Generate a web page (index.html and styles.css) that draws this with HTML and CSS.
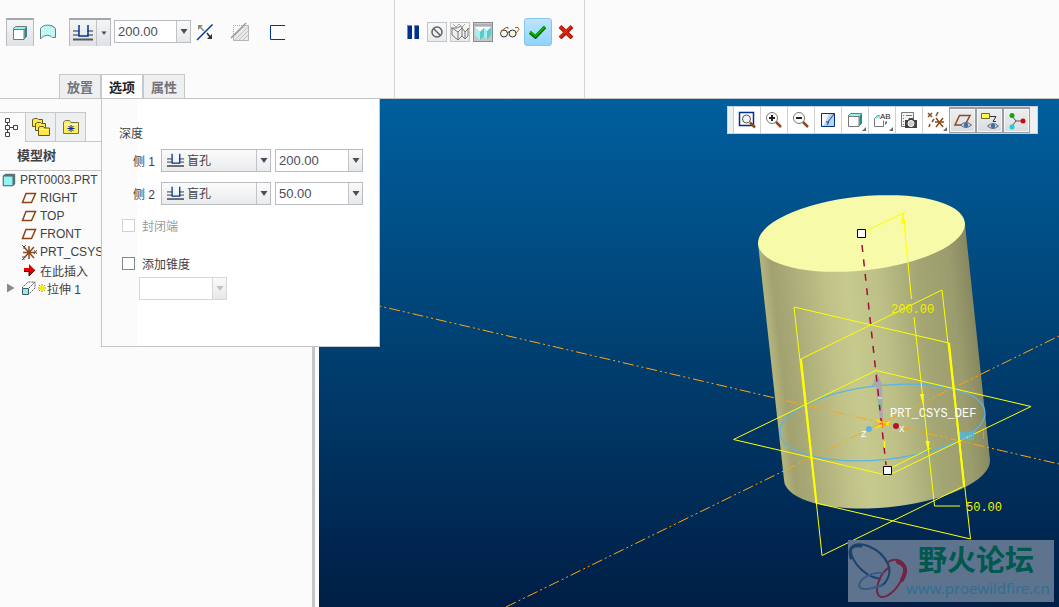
FILE: index.html
```html
<!DOCTYPE html>
<html lang="zh-CN">
<head>
    <meta charset="UTF-8">
    <meta name="viewport" content="width=device-width, initial-scale=1.0">
    <title>PRT0003</title>
    <link rel="stylesheet" href="styles.css">
</head>
<body>

    <svg class="sprites" aria-hidden="true">
        <symbol id="blind" viewBox="0 0 20 16">
            <path d="M0 6h6M14 6h6M0 10h6M14 10h6" stroke="#8b8d90" stroke-width="2"/>
            <path d="M0 14.5h20" stroke="#55585c" stroke-width="2"/>
            <path d="M6 0v11h9V0" fill="none" stroke="#003399" stroke-width="1.500"/>
        </symbol>
        <symbol id="plane" viewBox="0 0 16 12">
            <path d="M5 1.5h9.5L10.500 10.500H1.500z" fill="none" stroke="#8b4513" stroke-width="1.500"/>
        </symbol>
        <symbol id="down" viewBox="0 0 8 5">
            <path d="M0.500 0h7L4 5z" fill="currentColor"/>
        </symbol>
        <symbol id="cube" viewBox="0 0 16 16">
            <path d="M1 4L3.500 1.500h11v10L12 14z" fill="#8ef4f4" stroke="#777"/>
            <path d="M12.500 4l2-2.500v10l-2 2.500z" fill="#1f8a8e"/>
            <path d="M1.500 4.500h10.500v10h-10.500z" fill="#fff" stroke="#777"/>
        </symbol>
        <symbol id="eye" viewBox="0 0 12 8">
            <path d="M0.500 4Q6-1 11.500 4Q6 9 0.500 4z" fill="#c9d2dc" stroke="#667"/>
            <circle cx="6" cy="4" r="2.200" fill="#3b6fa8"/>
        </symbol>
    </svg>

    <header class="ribbon">
        <div class="tools">
            <div class="group group-main">
                <button class="tool pressed" title="实体"><svg width="16" height="16"><use href="#cube"/></svg></button>
                <button class="tool plain" title="曲面">
                    <svg width="18" height="18" viewBox="0 0 18 18">
                        <path d="M1.500 16V5.500C4 1 13 1 16.500 5.500V14.500H13.500C9 11 5 12 1.500 16z" fill="#b5f5f3" stroke="#5f7f84"/>
                        <path d="M4 5v8M7 4v8M10 4v8M13 5v9M2 7h14M2 10h14" stroke="#fff" stroke-dasharray="1 1"/>
                    </svg>
                </button>
                <div class="split">
                    <button title="盲孔"><svg width="20" height="16"><use href="#blind"/></svg></button>
                    <button class="split-arrow" title="深度选项"><svg width="6" height="4" viewBox="0 0 8 5"><use href="#down"/></svg></button>
                </div>
                <div class="combo">
                    <input type="text" value="200.00" aria-label="深度值">
                    <button title="最近值"><svg width="8" height="5"><use href="#down"/></svg></button>
                </div>
                <button class="tool plain" title="反向">
                    <svg width="18" height="18" viewBox="0 0 18 18">
                        <path d="M1 17L16.500 1.500" stroke="#003399" stroke-width="1.500"/>
                        <path d="M2 2h5L2 7z" fill="#8a8a78"/><path d="M4 4l4 4" stroke="#8a8a78" stroke-width="1.500"/>
                        <path d="M16 16h-5l5-5z" fill="#333"/><path d="M11 10l3 4" stroke="#333" stroke-width="1.500"/>
                    </svg>
                </button>
                <button class="tool plain cut" title="移除材料" disabled>
                    <svg width="20" height="20" viewBox="0 0 20 20">
                        <path d="M3.500 12V3.500H13" fill="none" stroke="#aaa" stroke-dasharray="1 1"/>
                        <path d="M3.500 14.500L15 3.500H18.500V18.500H3.500z" fill="#e9e9e9" stroke="#b5b5b5"/>
                        <path d="M5 18L18 5M9 18l9-9M13 18l5-5" stroke="#c2c2c2"/>
                        <path d="M1 16L16 1" stroke="#999" stroke-width="1.500"/>
                    </svg>
                </button>
                <button class="tool plain thicken" title="加厚草绘">
                    <svg width="18" height="18" viewBox="0 0 18 18"><path d="M17 2.500H2.500v14H17" fill="none" stroke="#003399"/></svg>
                </button>
            </div>
            <div class="group group-confirm">
                <button class="tool plain" title="暂停">
                    <svg width="12" height="14" viewBox="0 0 12 14"><path d="M0 0h5v14H0zM7 0h5v14H7z" fill="#6d8fc0"/><path d="M1 1h4v13H1zM8 1h4v13H8z" fill="#003087"/></svg>
                </button>
                <button class="mini" title="无预览">
                    <svg width="14" height="14" viewBox="0 0 14 14"><circle cx="7" cy="7" r="5" fill="none" stroke="#606266" stroke-width="1.500"/><path d="M3.500 3.500l7 7" stroke="#606266" stroke-width="1.500"/></svg>
                </button>
                <button class="mini" title="分离预览">
                    <svg width="18" height="18" viewBox="0 0 18 18" fill="none" stroke="#77776f">
                        <path d="M0 5h6l4-2M1 5v7l6 5 4-4V5M7 9v8M1 5l6 4 4-4 3 4 4-4M14 9v7l-3-3M17 5v8l-3 3"/>
                        <path d="M2 1l4 4M8 1l4 4M14 1l-4 4M8 1L4 5" stroke="#aaa89a"/>
                    </svg>
                </button>
                <button class="mini mini-on" title="连接预览">
                    <svg width="18" height="18" viewBox="0 0 18 18">
                        <path d="M1 4h16l-3 5-4-4-4 4z" fill="#fff"/>
                        <path d="M1 4l5 5v8l-5-5zM10 5l3 3v9l-3-4z" fill="#a9eeee"/>
                        <path d="M6 9l4-4v8l-4 4zM13 8l4-4v8l-4 5z" fill="#5cc9cb"/>
                        <path d="M0 2h18" stroke="#999"/>
                    </svg>
                </button>
                <button class="tool plain" title="校验">
                    <svg width="22" height="12" viewBox="0 0 22 12" fill="none">
                        <circle cx="5" cy="7.500" r="3.500" fill="#f5f7e4" stroke="#333"/><circle cx="13.500" cy="7.500" r="3.500" fill="#f5f7e4" stroke="#333"/>
                        <path d="M8.500 6.500q1-1 2 0" stroke="#333"/><path d="M3 4.500L7 1.500h2v1.500M17 7l3-3.500-1-2h-3" stroke="#a5562a"/>
                    </svg>
                </button>
                <button class="ok" title="确定">
                    <svg width="20" height="14" viewBox="0 0 20 14"><path d="M2 7.500L7.500 12 17 2" fill="none" stroke="#006b00" stroke-width="3.500"/><path d="M2 6.500L7.500 11 17 1.500" fill="none" stroke="#10b000" stroke-width="2"/></svg>
                </button>
                <button class="tool plain" title="取消">
                    <svg width="16" height="14" viewBox="0 0 16 14"><path d="M2 1.500l12 11.500M14 1.500L2 13" stroke="#a51400" stroke-width="4"/><path d="M2 1.500l11 10.500M13 1.500L2 12" stroke="#e02810" stroke-width="2"/></svg>
                </button>
            </div>
        </div>
        <nav class="tabs">
            <button class="tab">放置</button>
            <button class="tab active">选项</button>
            <button class="tab">属性</button>
        </nav>
    </header>

    <main class="workspace">
        <aside class="sidebar">
            <div class="side-tabs">
                <button class="side-tab active" title="模型树">
                    <svg width="14" height="20" viewBox="0 0 14 20" fill="none" stroke="#444"><path d="M1.500 1.500h4v4h-4zM1.500 8.500h4v4h-4zM9.500 8.500h4v4h-4zM1.500 15.500h4v4h-4zM3.500 5.500v3M3.500 12.500v3M5.500 10.500h4"/></svg>
                </button>
                <button class="side-tab" title="文件夹浏览器">
                    <svg width="20" height="20" viewBox="0 0 20 20" fill="#ffe64a" stroke="#5d5a20">
                        <path d="M1.500 9.500v-7l2-1h3l1 1h4v7z"/><path d="M4.500 13.500v-7l2-1h3l1 1h4v7z"/><path d="M7.500 18.500v-8l2-1h3l1 1.500h5v7.500z"/><path d="M8 12.500h10" stroke="#fff9b0"/>
                    </svg>
                </button>
                <button class="side-tab" title="收藏夹">
                    <svg width="18" height="16" viewBox="0 0 18 16"><path d="M1.500 14.500V3l2-1.500h4L9 3.500h7.500v11z" fill="#ffef55" stroke="#77773a"/><path d="M2 5.500h14" stroke="#fffbc0"/><path d="M9 6v7M5.500 9.500h7M6.500 7l5 5M11.500 7l-5 5" stroke="#0a2a9c"/></svg>
                </button>
            </div>
            <h2>模型树</h2>
            <ul class="tree">
                <li class="root"><svg width="14" height="14" viewBox="0 0 16 16"><path d="M1.500 3.500l2-2h11v11l-2 2h-11z" fill="#2a8f92" stroke="#556"/><path d="M1.500 3.500h11v11h-11z" fill="#90f5f5" stroke="#566"/></svg>PRT0003.PRT</li>
                <li><svg width="16" height="12"><use href="#plane"/></svg>RIGHT</li>
                <li><svg width="16" height="12"><use href="#plane"/></svg>TOP</li>
                <li><svg width="16" height="12"><use href="#plane"/></svg>FRONT</li>
                <li><svg width="16" height="16" viewBox="0 0 16 16"><path d="M8 2v13M2 8.500h12M3 3l10 11M13 3L3 14" stroke="#8b4a20" stroke-width="1.500"/><path d="M1 1l2 2 2-2M3 3v2M1 13h3l-3 3h3M13 6l3 4M16 6l-3 4" stroke="#555" fill="none"/></svg>PRT_CSYS</li>
                <li class="insert"><svg width="12" height="12" viewBox="0 0 12 12"><path d="M0 4h5V0l6 6-6 6V8H0z" fill="#e00000"/><path d="M0 7.500h5V12l6-6" stroke="#500" fill="none"/></svg>在此插入</li>
                <li class="feature">
                    <svg width="8" height="10" viewBox="0 0 8 10"><path d="M0 0.500l7.500 4.500L0 9.500z" fill="#888"/></svg>
                    <svg width="16" height="16" viewBox="0 0 16 16"><path d="M1 8l6-6h7v6l-6 6M8 8l6-6" fill="none" stroke="#555" stroke-dasharray="2 1"/><path d="M1.500 8.500h6v6h-6z" fill="#8ef0f0" stroke="#456"/></svg>
                    <svg width="8" height="8" viewBox="0 0 8 8"><path d="M4 0v8M0 4h8M1 1l6 6M7 1L1 7" stroke="#a89c00"/><circle cx="4" cy="4" r="2.500" fill="#ffee00"/></svg>拉伸 1
                </li>
            </ul>
        </aside>

        <form class="options">
            <div class="section-title">深度</div>
            <div class="row">
                <label for="side1">侧 1</label>
                <div class="picker">
                    <svg width="17" height="15"><use href="#blind"/></svg>
                    <select id="side1"><option>盲孔</option></select>
                    <span class="picker-arrow"><svg width="8" height="5"><use href="#down"/></svg></span>
                </div>
                <div class="combo">
                    <input type="text" value="200.00" aria-label="侧 1 深度">
                    <button type="button" title="最近值"><svg width="8" height="5"><use href="#down"/></svg></button>
                </div>
            </div>
            <div class="row">
                <label for="side2">侧 2</label>
                <div class="picker">
                    <svg width="17" height="15"><use href="#blind"/></svg>
                    <select id="side2"><option>盲孔</option></select>
                    <span class="picker-arrow"><svg width="8" height="5"><use href="#down"/></svg></span>
                </div>
                <div class="combo">
                    <input type="text" value="50.00" aria-label="侧 2 深度">
                    <button type="button" title="最近值"><svg width="8" height="5"><use href="#down"/></svg></button>
                </div>
            </div>
            <label class="check disabled"><input type="checkbox" disabled>封闭端</label>
            <label class="check"><input type="checkbox">添加锥度</label>
            <div class="combo taper disabled">
                <input type="text" aria-label="锥度" disabled>
                <button type="button" title="最近值" disabled><svg width="8" height="5"><use href="#down"/></svg></button>
            </div>
        </form>

        <section class="viewport">
            <svg class="scene" viewBox="319 99 740 508" preserveAspectRatio="xMidYMid slice">
                <defs>
                    <linearGradient id="body" gradientUnits="userSpaceOnUse" x1="758" y1="243" x2="965" y2="220">
                        <stop offset="0" stop-color="#b4b57e"/>
                        <stop offset="0.050" stop-color="#a2a271"/>
                        <stop offset="0.120" stop-color="#a8a976"/>
                        <stop offset="0.300" stop-color="#bfc187"/>
                        <stop offset="0.400" stop-color="#c7ca8e"/>
                        <stop offset="0.550" stop-color="#bec187"/>
                        <stop offset="0.750" stop-color="#a3a573"/>
                        <stop offset="0.900" stop-color="#9c9d6e"/>
                        <stop offset="1" stop-color="#86875f"/>
                    </linearGradient>
                </defs>

                <!-- cylinder -->
                <path d="M758 243L784 480A103 37 -6 0 0 990 460L965 224z" fill="url(#body)"/>
                <ellipse cx="861.500" cy="233.500" rx="104" ry="37" transform="rotate(-6 861.500 233.500)" fill="#f6faa9"/>

                <!-- datum axes -->
                <g stroke="#ffa510" stroke-dasharray="11 3 2 3 2 3">
                    <path d="M319 292L1059 464"/>
                    <path d="M506 607L1059 336"/>
                </g>

                <!-- sketch circle -->
                <ellipse cx="882.500" cy="422.500" rx="103" ry="37" transform="rotate(-6 882.500 422.500)" fill="none" stroke="#5ab4e6" stroke-width="1.200"/>

                <!-- datum planes -->
                <g fill="none" stroke="#ffff00">
                    <path d="M794 307L949 343L970.500 539L816 503z"/>
                    <path d="M942 290L801 359L822 555.500L964 486z"/>
                    <path d="M876 370.500L1031 406.500L888 475.500L733.500 439.500z"/>
                    <path d="M801 359L816.500 503M949 343L964 486" stroke-width="2"/>
                    <path d="M863 232.500L905.500 212M903 213L911.500 299M914 317L934.500 506H960M889 469L931 448"/>
                </g>
                <path d="M903 213l-2 11h4.500zM923 405l-3-11h4zM928.500 452l-3-11h4z" fill="#ffff00"/>

                <!-- drag axis -->
                <path d="M877 373l-5 13 4 1 4 33 3 0-1-34 1 0z" fill="#aba9ad"/>
                <path d="M862 245L886 465" stroke="#a00f3c" stroke-width="1.500" stroke-dasharray="7 7.500"/>
                <path d="M884.500 441v7" stroke="#ffff00" stroke-width="1.500"/>
                <path d="M878 398h4" stroke="#eee"/>
                <path d="M878 404h4" stroke="#4bdc68" stroke-width="2"/>

                <!-- coordinate system -->
                <path d="M875 428l15-6M876 420l13 5M882 424l-3 3" stroke="#ffe600" stroke-width="1.500"/>
                <path d="M879 424h7M882.500 420v8" stroke="#ff7b1c"/>
                <circle cx="869" cy="429" r="3" fill="#5ab4e6"/>
                <circle cx="896" cy="426" r="3" fill="#b3122e"/>
                <text class="axis" x="861" y="437">Z</text>
                <text class="axis" x="899" y="432">X</text>
                <text class="note" x="890" y="417">PRT_CSYS_DEF</text>
                <text class="section" x="959" y="439">截面</text>
                <path d="M983.500 431v8" stroke="#5ab4e6"/>

                <text class="dim" x="891" y="313">200.00</text>
                <text class="dim" x="966" y="511">50.00</text>

                <!-- handles -->
                <path d="M857.500 229.500h8v8h-8zM883.500 466.500h8v8h-8z" fill="#fff" stroke="#000"/>

                <!-- watermark -->
                <rect x="848" y="540" width="206" height="62" fill="#5d738e"/>
                <g fill="none" stroke-linecap="round">
                    <path d="M880 579C861 576 847 555 852 547C858 540 880 547 888 564C893 576 883 588 878 586" stroke="#1c426c" stroke-width="2"/>
                    <path d="M851 558Q847 544 861 546" stroke="#1c426c" stroke-width="3"/>
                    <path d="M888 562C896 557 907 561 904 572C901 586 889 598 881 597C873 594 878 576 888 568" stroke="#722446" stroke-width="2"/>
                    <path d="M898 562Q910 566 902 580" stroke="#722446" stroke-width="4"/>
                    <path d="M883 573C872 571 859 579 859 586C862 592 873 588 882 585" stroke="#365c82" stroke-width="2"/>
                </g>
                <text class="mark-name" x="918" y="571">野火论坛</text>
                <text class="mark-url" x="906" y="594">www.proewildfire.cn</text>
            </svg>

            <div class="view-bar">
                <button title="重新调整"><svg width="18" height="18" viewBox="0 0 18 18"><path d="M1.500 1.500h14v13h-14z" fill="#fff" stroke="#003087" stroke-width="1.500"/><circle cx="8.500" cy="8" r="4" fill="#eef4f8" stroke="#555"/><path d="M12 11.500l5 5" stroke="#8b4a20" stroke-width="2.500"/></svg></button>
                <button title="放大"><svg width="18" height="18" viewBox="0 0 18 18"><circle cx="7" cy="7" r="5.500" fill="#fff" stroke="#777"/><path d="M4 7h6M7 4v6" stroke="#222" stroke-width="2"/><path d="M11 11l5 5" stroke="#8b4a20" stroke-width="2.500"/></svg></button>
                <button title="缩小"><svg width="18" height="18" viewBox="0 0 18 18"><circle cx="7" cy="7" r="5.500" fill="#fff" stroke="#777"/><path d="M4 7h6" stroke="#222" stroke-width="2"/><path d="M11 11l5 5" stroke="#8b4a20" stroke-width="2.500"/></svg></button>
                <button title="重画"><svg width="18" height="18" viewBox="0 0 18 18"><path d="M2.500 2.500h13v13h-13z" fill="#b9d3ea" stroke="#003087"/><path d="M3 3h7L5 14H3z" fill="#f4f8fc"/><path d="M15 3l-6 8M7 11l3 0-2 3" stroke="#173e8a" fill="none"/></svg></button>
                <button class="more" title="显示样式"><svg width="16" height="16"><use href="#cube"/></svg></button>
                <button class="more" title="已保存方向"><svg width="18" height="18" viewBox="0 0 18 18"><path d="M7 4.500H4.500l-3 3v8h9v-6" fill="none" stroke="#777"/><path d="M2 7.500l3-3h2v3z" fill="#7deeee"/><path d="M12 11v3l2-2v-2" fill="#168b90"/><text class="ab" x="7" y="8">AB</text></svg></button>
                <button title="视图管理器"><svg width="18" height="18" viewBox="0 0 18 18"><path d="M1.500 1.500h12v14h-12z" fill="#f4f4f4" stroke="#777"/><path d="M3 4.500h1M6 4.500h6M3 7.500h1M3 10.500h1M3 13.500h1" stroke="#777"/><path d="M5 9h3l1-2h4l1 2h3v8H5z" fill="#444"/><circle cx="11" cy="12.500" r="3" fill="#ccc" stroke="#fff"/></svg></button>
                <button class="more" title="基准显示"><svg width="20" height="18" viewBox="0 0 20 18" stroke="#8b4a20" stroke-width="1.500"><path d="M2 2l4 4M6 2L2 6M12 1l-2 4M8 8l-2 3M4 13l-1 3M10 7l7 9M17 7l-7 9M9 11h9"/></svg></button>
                <button class="on" title="平面显示"><svg width="20" height="18" viewBox="0 0 20 18"><path d="M6.500 3.500H17L12 13H2z" fill="none" stroke="#8b4a20" stroke-width="1.500"/><use href="#eye" x="7" y="9" width="12" height="8"/></svg></button>
                <button class="on" title="注释显示"><svg width="20" height="18" viewBox="0 0 20 18"><path d="M1.500 1.500h8v5h-8z" fill="#ffff55" stroke="#6c6c28"/><path d="M10 4.500h6l-3 5h3" fill="none" stroke="#333"/><use href="#eye" x="7" y="10" width="12" height="8"/></svg></button>
                <button class="on" title="旋转中心"><svg width="18" height="18" viewBox="0 0 18 18"><path d="M4 4l4 5h6M8 9l-4 5" fill="none" stroke="#555"/><circle cx="4" cy="3.500" r="2.500" fill="#12a612"/><circle cx="15" cy="9" r="2.500" fill="#d00808"/><circle cx="4" cy="15" r="2.500" fill="#18cfd4"/></svg></button>
            </div>
        </section>
    </main>

</body>
</html>
```
FILE: styles.css
```css
* {
    box-sizing: border-box;
}
body {
    margin: 0;
    height: 100vh;
    display: flex;
    flex-direction: column;
    overflow: hidden;
    background: #fbfbfb;
    color: #3f4145;
    font-family: "Liberation Sans", "Noto Sans CJK SC", sans-serif;
    font-size: 12px;
}
button, input, select {
    font: inherit;
    color: inherit;
    margin: 0;
    padding: 0;
    border: none;
    background: none;
}
button {
    display: flex;
    align-items: center;
    justify-content: center;
}
svg {
    display: block;
    flex: none;
}
.sprites {
    position: absolute;
    width: 0;
    height: 0;
}

/* ribbon */
.ribbon {
    position: relative;
    flex: none;
    height: 99px;
    border-bottom: 1px solid #c3c6c9;
}
.tools {
    display: flex;
    height: 98px;
}
.group {
    display: flex;
    align-items: flex-start;
    padding-top: 18px;
    border-right: 1px solid #d4d6d8;
}
.group-main {
    width: 395px;
    padding-left: 6px;
}
.group-confirm {
    width: 190px;
    padding-left: 4px;
}
.tool {
    width: 28px;
    height: 28px;
}
.pressed, .split {
    border: 1px solid #b9bcc0;
    border-top: 2px solid #a4a6a9;
    border-bottom: none;
    background: linear-gradient(#f4f5f6, #dfe1e5);
}
.split {
    display: flex;
    width: 42px;
    height: 28px;
    margin: 0 3px 0 7px;
    color: #4b4d58;
}
.split button {
    flex: 1;
}
.split .split-arrow {
    flex: none;
    width: 14px;
    border-left: 1px solid #c0c3c7;
}
.cut {
    margin-left: 7px;
}
.thicken {
    margin-left: 9px;
}
.combo {
    display: flex;
    width: 88px;
    height: 23px;
    border: 1px solid #b9bcc0;
    background: #fff;
    color: #4b4d58;
    font-size: 13px;
}
.combo input {
    flex: 1;
    min-width: 0;
    padding-left: 3px;
}
.combo button {
    width: 14px;
    border-left: 1px solid #c0c3c7;
    background: linear-gradient(#fafafa, #e6e8ea);
}
.group .combo {
    width: 77px;
    margin-top: 2px;
}
.mini {
    width: 20px;
    height: 20px;
    margin: 4px 3px 0 0;
    border: 1px solid #c3c6c9;
    background: linear-gradient(#f8f8f8, #e9eaec);
}
.mini-on {
    border-color: #888b8e;
    background: #c4c6c8;
}
.ok {
    width: 28px;
    height: 28px;
    border: 1px solid #86c5ee;
    border-radius: 3px;
    background: linear-gradient(#bfe5fb, #90d2fb);
}
.tabs {
    position: absolute;
    left: 59px;
    bottom: 0;
    display: flex;
}
.tab {
    width: 42px;
    height: 24px;
    border: 1px solid #c6c9cc;
    border-bottom: none;
    background: #eeeff1;
    color: #717379;
    font-size: 13px;
    font-weight: bold;
}
.tab.active {
    background: #fff;
    color: #222;
}

/* model tree */
.workspace {
    position: relative;
    flex: 1;
    min-height: 0;
    display: flex;
}
.sidebar {
    flex: none;
    width: 319px;
    padding-top: 13px;
    background: linear-gradient(90deg, #fbfbfb 312px, #c3c6c9 312px, #c3c6c9 315px, #fbfbfb 315px);
}
.side-tabs {
    display: flex;
    height: 30px;
    width: 312px;
    border-bottom: 1px solid #c6c9cc;
}
.side-tab {
    width: 30px;
    height: 29px;
    border: solid #c6c9cc;
    border-width: 1px 1px 0 0;
    background: #eeeff1;
}
.side-tab.active {
    width: 26px;
    height: 30px;
    padding: 0 3px 2px 0;
    background: #fbfbfb;
}
.sidebar h2 {
    width: 312px;
    height: 29px;
    margin: 0;
    padding-left: 17px;
    border-bottom: 1px solid #c6c9cc;
    font-size: 13px;
    line-height: 28px;
}
.tree {
    list-style: none;
    margin: 0;
    padding: 0;
}
.tree li {
    display: flex;
    align-items: center;
    gap: 3px;
    height: 18px;
    padding-left: 21px;
}
.tree .root {
    gap: 4px;
    padding-left: 2px;
}
.tree .insert {
    gap: 4px;
    padding-left: 24px;
}
.tree .feature {
    gap: 1px;
    padding-left: 7px;
}
.feature svg:first-child {
    margin-right: 5px;
}

/* options panel */
.options {
    position: absolute;
    z-index: 2;
    top: 0;
    left: 101px;
    width: 279px;
    padding: 26px 16px 46px 17px;
    border: 1px solid #c3c6c9;
    border-top: none;
    background: linear-gradient(90deg, #fbfbfb 35px, #fff 35px);
}
.section-title {
    height: 18px;
    margin-bottom: 6px;
    line-height: 18px;
}
.row {
    display: flex;
    align-items: center;
    gap: 4px;
    margin-bottom: 10px;
    padding-left: 14px;
}
.row label {
    width: 24px;
}
.picker {
    display: flex;
    align-items: center;
    width: 110px;
    height: 23px;
    padding-left: 5px;
    border: 1px solid #b9bcc0;
    background: linear-gradient(#fbfbfb, #eaebed);
}
.picker select {
    flex: 1;
    min-width: 0;
    height: 21px;
    padding-left: 3px;
    appearance: none;
}
.picker-arrow {
    display: flex;
    align-items: center;
    justify-content: center;
    width: 14px;
    height: 21px;
    border-left: 1px solid #c0c3c7;
    color: #4b4d58;
    pointer-events: none;
}
.check {
    display: flex;
    align-items: center;
    gap: 7px;
    height: 18px;
    margin-top: 20px;
    padding-left: 3px;
}
.row + .check {
    margin-top: 11px;
}
.check input {
    width: 13px;
    height: 13px;
    border: 1px solid #85888c;
    background: #fff;
    appearance: none;
}
.check input:checked {
    background: #003399;
}
.check.disabled {
    color: #989a9d;
}
.check.disabled input {
    border-color: #d0d2d4;
}
.combo.taper {
    margin: 5px 0 0 20px;
}
.combo.disabled {
    border-color: #d5d7d9;
    color: #bfc2c5;
}
.combo.disabled button {
    border-color: #d5d7d9;
}

/* graphics window */
.viewport {
    position: relative;
    flex: 1;
    min-width: 0;
    background: linear-gradient(#005f9e, #003f70 50%, #001e45);
}
.scene {
    width: 100%;
    height: 100%;
}
.scene text {
    font-family: "Liberation Mono", "Noto Sans CJK SC", monospace;
    font-size: 12px;
}
.scene .dim {
    fill: #f0f000;
}
.scene .note {
    fill: #fff;
}
.scene .axis {
    fill: #fff;
    font-size: 9px;
}
.scene .section {
    fill: #5ab4e6;
    font-size: 8px;
    font-weight: bold;
}
.scene .mark-name {
    fill: #00584f;
    font-family: "Noto Sans CJK SC", sans-serif;
    font-size: 29px;
    font-weight: bold;
}
.scene .mark-url {
    fill: #2f7093;
    font-family: "Noto Sans", sans-serif;
    font-size: 15px;
}
.view-bar {
    position: absolute;
    top: 7px;
    right: 21px;
    display: flex;
    height: 28px;
    padding: 0 7px 0 5px;
    border: 1px solid #cdd2d6;
    background: #eef0f2;
}
.view-bar button {
    position: relative;
    width: 27px;
    height: 26px;
    border-left: 1px solid #cdd0d3;
    background: #fff;
}
.view-bar .on {
    border: 1px solid #9b9ea2;
    border-top-width: 2px;
    background: linear-gradient(#eceef0, #dadde0);
    box-shadow: inset 0 0 0 1px #f6f6f6;
}
.view-bar .more::after {
    content: "";
    position: absolute;
    right: 2px;
    bottom: 2px;
    border: 2px solid;
    border-color: transparent #666 #666 transparent;
}
.view-bar .ab {
    font-size: 8px;
    font-weight: normal;
    fill: #222;
}
```
